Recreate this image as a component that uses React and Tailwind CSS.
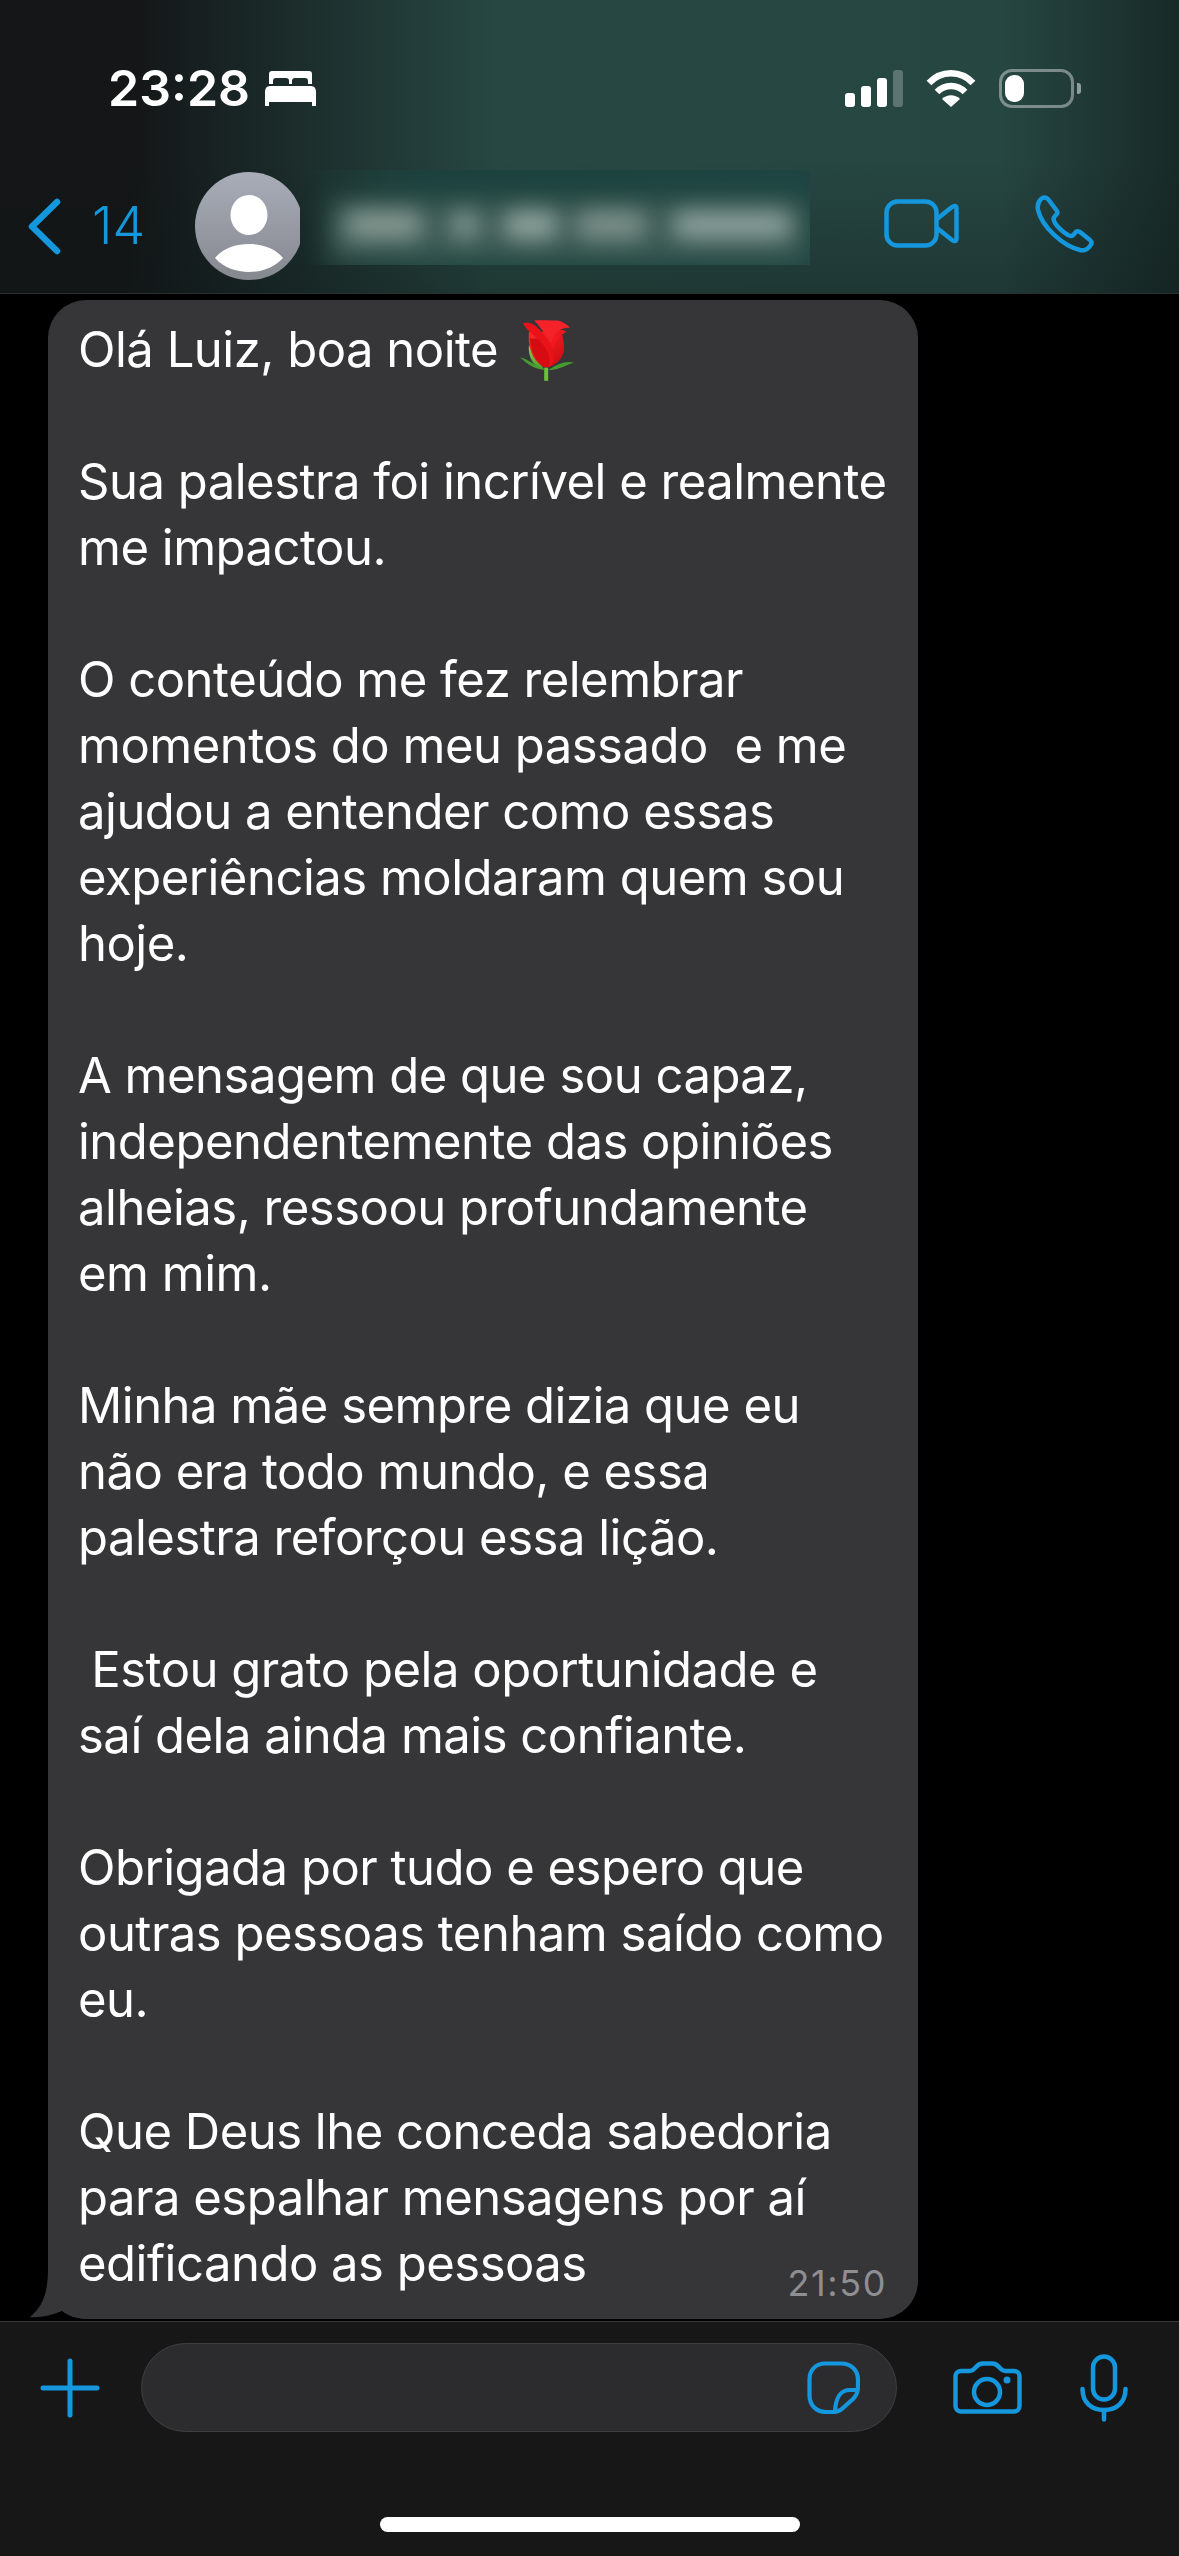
import React from "react";

const BLUE = "#1597de";

const lines = `Olá Luiz, boa noite 

Sua palestra foi incrível e realmente
me impactou.

O conteúdo me fez relembrar
momentos do meu passado  e me
ajudou a entender como essas
experiências moldaram quem sou
hoje.

A mensagem de que sou capaz,
independentemente das opiniões
alheias, ressoou profundamente
em mim.

Minha mãe sempre dizia que eu
não era todo mundo, e essa
palestra reforçou essa lição.

 Estou grato pela oportunidade e
saí dela ainda mais confiante.

Obrigada por tudo e espero que
outras pessoas tenham saído como
eu.

Que Deus lhe conceda sabedoria
para espalhar mensagens por aí
edificando as pessoas`.split("\n");

const Bed = () => (
  <svg width="51" height="35" viewBox="0 0 51 35" fill="#fff">
    <path d="M7 0 H44 Q47 0 47 3 V13 H43 V10 Q43 7 40 7 H30 Q27 7 27 10 V13 H24 V10 Q24 7 21 7 H11 Q8 7 8 10 V13 H4 V3 Q4 0 7 0Z" />
    <path d="M5 15 H46 Q51 15 51 21 V35 H47 V31 H4 V35 H0 V21 Q0 15 5 15Z" />
  </svg>
);

const Signal = () => (
  <div className="flex items-end gap-[6px] h-[37px]">
    <div className="w-[10px] h-[14px] rounded-[3px] bg-white" />
    <div className="w-[10px] h-[21px] rounded-[3px] bg-white" />
    <div className="w-[10px] h-[29px] rounded-[3px] bg-white" />
    <div className="w-[10px] h-[37px] rounded-[3px] bg-white/25" />
  </div>
);

const Wifi = () => (
  <svg width="50" height="37" viewBox="0 0 50 37" fill="none" stroke="#fff" strokeWidth="6.5">
    <path d="M3 13 C15 0 35 0 47 13" />
    <path d="M11 22 C19 14 31 14 39 22" />
    <path d="M25 37 L16 29 C21 24 29 24 34 29 Z" fill="#fff" stroke="none" />
  </svg>
);

const Battery = () => (
  <div className="flex items-center gap-[3px]">
    <div className="w-[75px] h-[39px] rounded-[13px] border-[3px] border-white/40 p-[3px]">
      <div className="w-[19px] h-[27px] rounded-[9px] bg-white" />
    </div>
    <div className="w-[4px] h-[11px] rounded-r-[3px] bg-white/50" />
  </div>
);

const Chevron = () => (
  <svg width="33" height="57" viewBox="0 0 33 57" fill="none" stroke={BLUE} strokeWidth="6.5" strokeLinecap="round" strokeLinejoin="round">
    <path d="M29 4 L4 28.5 L29 53" />
  </svg>
);

const Avatar = () => (
  <div className="w-[105px] h-[108px] overflow-hidden shrink-0">
    <svg width="108" height="108" viewBox="0 0 108 108">
      <defs>
        <linearGradient id="av" x1="0" y1="0" x2="0" y2="1">
          <stop offset="0" stopColor="#a9adb8" />
          <stop offset="1" stopColor="#85888f" />
        </linearGradient>
      </defs>
      <circle cx="54" cy="54" r="54" fill="url(#av)" />
      <ellipse cx="54" cy="43" rx="18.5" ry="20" fill="#fff" />
      <path d="M20 86 C28 76 41 72 54 72 C67 72 80 76 88 86 C80 95 67 100 54 100 C41 100 28 95 20 86Z" fill="#fff" />
    </svg>
  </div>
);

const BlurredName = () => (
  <div className="relative w-[510px] h-[95px] shrink-0 overflow-hidden bg-linear-to-r from-transparent via-[#1d423e] via-[25%] to-[#1e4541]">
    <div className="absolute left-[30px] right-[4px] top-[30px] h-[60px] bg-[#3e5c56] blur-[12px]" />
    <div className="absolute inset-0 flex items-center pl-[45px] pt-[14px]">
      <div className="w-[78px] h-[26px] rounded-full bg-[#8a9c95] blur-[11px]" />
      <div className="ml-[26px] w-[32px] h-[26px] rounded-full bg-[#80968f] blur-[11px]" />
      <div className="ml-[22px] w-[56px] h-[26px] rounded-full bg-[#94a7a1] blur-[11px]" />
      <div className="ml-[16px] w-[72px] h-[26px] rounded-full bg-[#80938d] blur-[11px]" />
      <div className="ml-[25px] w-[120px] h-[26px] rounded-full bg-[#8fa3a0] blur-[11px]" />
    </div>
  </div>
);

const VideoIcon = () => (
  <svg width="75" height="50" viewBox="0 0 75 50" fill="none" stroke={BLUE} strokeWidth="4.5" strokeLinejoin="round">
    <rect x="2.5" y="2.5" width="50" height="44" rx="11" />
    <path d="M53 20 L68 8 Q72.5 5 72.5 10 V39 Q72.5 44 68 41 L53 29" />
  </svg>
);

const PhoneIcon = () => (
  <svg width="60" height="60" viewBox="0 0 60 60" fill="none" stroke={BLUE} strokeWidth="4.5" strokeLinejoin="round">
    <path d="M6 5 C8 3 11 3 13 5 L22 17 C23 19 22 20 20 22 C18 24 18 26 20 29 C24 35 28 38 33 41 C36 43 38 42 40 39 C41 37 43 37 45 38 L55 46 C57 48 57 50 55 52 C52 56 49 57 45 56 C28 52 7 33 3 16 C2 11 3 8 6 5 Z" />
  </svg>
);

const Rose = () => (
  <svg width="54" height="62" viewBox="65 52 163 186" className="inline-block ml-[9px] align-[-14px]">
    <defs>
      <linearGradient id="petal" x1="0" y1="0" x2="1" y2="1">
        <stop offset="0" stopColor="#ff2a2a" />
        <stop offset="1" stopColor="#c9080f" />
      </linearGradient>
      <linearGradient id="leaf" x1="0" y1="0" x2="0" y2="1">
        <stop offset="0" stopColor="#9ad050" />
        <stop offset="1" stopColor="#469a30" />
      </linearGradient>
    </defs>
    <rect x="138" y="198" width="12" height="40" fill="#6cc03a" />
    <path d="M65 168 C90 172 105 190 140 205 C110 205 90 190 65 168Z" fill="#469a30" />
    <path d="M228 183 C195 176 175 192 150 205 C180 208 205 190 228 183Z" fill="#469a30" />
    <path d="M92 130 C88 165 105 198 140 205 C120 180 105 155 92 130Z" fill="url(#leaf)" />
    <path d="M92 90 C88 130 98 172 135 196 C150 202 190 185 197 150 C201 125 192 100 190 90 Z" fill="url(#petal)" />
    <path d="M165 145 C170 120 185 100 205 90 C192 80 170 85 150 105 Z" fill="#f2181d" />
    <path d="M108 55 C130 55 150 55 180 56 C200 62 215 75 216 78 C190 75 170 90 158 125 C145 100 125 75 108 55Z" fill="#f5222a" />
    <path d="M74 64 C90 58 108 65 125 85 C145 108 165 135 165 175 C165 185 160 195 150 197 C162 165 140 130 118 110 C100 95 85 85 74 64Z" fill="#ea1219" />
    <path d="M118 110 C140 130 162 165 150 197 C125 195 100 165 95 110 Z" fill="#d60c13" />
  </svg>
);

const PlusIcon = () => (
  <svg width="60" height="60" viewBox="0 0 60 60" stroke={BLUE} strokeWidth="5" strokeLinecap="round">
    <path d="M30 3 V57 M3 30 H57" />
  </svg>
);

const StickerIcon = () => (
  <svg width="53" height="53" viewBox="0 0 53 53" fill="none" stroke={BLUE} strokeWidth="4.2">
    <path d="M18 2.5 H34 C44 2.5 51 9 51 19 V26 C51 31 49 35 46 38 L36 47 C33 50 29 51 26 51 H19 C9 51 2.5 44 2.5 34 V18 C2.5 9 9 2.5 18 2.5 Z" />
    <path d="M51 29 H43 C34 29 29 35 28 50" />
  </svg>
);

const CameraIcon = () => (
  <svg width="69" height="53" viewBox="0 0 69 53" fill="none" stroke={BLUE} strokeWidth="4.5">
    <path d="M8 10 H17 C20 10 21 8 23 6 C25 3.5 27 2.5 30 2.5 H39 C42 2.5 44 3.5 46 6 C48 8 49 10 52 10 H61 C64 10 66.5 12 66.5 15 V45 C66.5 48 64 50.5 61 50.5 H8 C5 50.5 2.5 48 2.5 45 V15 C2.5 12 5 10 8 10 Z" />
    <circle cx="34" cy="31" r="13" />
    <circle cx="54" cy="19" r="3.5" fill={BLUE} stroke="none" />
  </svg>
);

const MicIcon = () => (
  <svg width="48" height="68" viewBox="0 0 48 68" fill="none" stroke={BLUE} strokeWidth="4.5" strokeLinecap="round">
    <rect x="13" y="2.5" width="22" height="43" rx="11" />
    <path d="M2.5 35 C2.5 48 11 56 24 56 C37 56 45.5 48 45.5 35" />
    <path d="M24 56 V65.5" />
  </svg>
);

const App = () => {
  return (
    <div className="w-[1179px] h-[2556px] flex flex-col bg-black overflow-hidden font-['Inter','Liberation_Sans',sans-serif]">
      <header className="h-[294px] shrink-0 border-b border-[#2c2f2f] bg-[linear-gradient(180deg,transparent_55%,rgba(12,22,22,0.3)_100%),linear-gradient(90deg,#141617_0%,#141617_11%,#1b2b2a_24%,#274742_42%,#264642_85%,#182a28_100%)]">
        <div className="flex items-center justify-between h-[38px] mt-[69px] pl-[108px] pr-[98px]">
          <div className="flex items-center gap-[15px]">
            <span className="text-[50px] leading-[38px] font-semibold text-white">23:28</span>
            <Bed />
          </div>
          <div className="flex items-center gap-[23px]">
            <Signal />
            <Wifi />
            <Battery />
          </div>
        </div>
        <div className="flex items-start mt-[63px] pl-[28px]">
          <div className="mt-[28px]"><Chevron /></div>
          <span className="w-[103px] ml-[31px] mt-[26px] text-[52px] leading-[60px] font-light text-[#1597de]">14</span>
          <div className="mt-[2px]"><Avatar /></div>
          <BlurredName />
          <div className="mt-[29px] ml-[74px]"><VideoIcon /></div>
          <div className="mt-[24px] ml-[76px]"><PhoneIcon /></div>
        </div>
      </header>

      <main className="flex-1 pt-[6px] pl-[48px] overflow-hidden">
        <div className="relative w-[870px] h-[2019px] rounded-[38px] bg-[#363638] pl-[30px] pt-[17px]">
          <svg width="60" height="50" viewBox="0 0 60 50" className="absolute left-[-18px] bottom-0" fill="#363638">
            <path d="M18 0 C18 25 12 38 0 48 C10 49 22 46 32 42 C40 48 48 50 60 50 L60 0 Z" />
          </svg>
          <div className="relative text-[49px] leading-[66px] tracking-[-0.5px] text-white whitespace-pre">
            {lines.map((line, i) => (
              <div key={i} className="h-[66px]">
                {line}
                {i === 0 && <Rose />}
              </div>
            ))}
          </div>
          <span className="absolute right-[31px] bottom-[18px] text-[36px] leading-[36px] tracking-[1.6px] text-[#8e8e93]">21:50</span>
        </div>
      </main>

      <footer className="h-[235px] shrink-0 border-t border-[#3a3a3a] bg-[#171717]">
        <div className="flex items-center mt-[21px] pl-[40px]">
          <PlusIcon />
          <div className="flex items-center justify-end ml-[41px] w-[756px] h-[89px] rounded-full border border-[#3f3f3f] bg-[#2c2c2e] pr-[36px]">
            <StickerIcon />
          </div>
          <div className="ml-[56px]"><CameraIcon /></div>
          <div className="ml-[58px]"><MicIcon /></div>
        </div>
        <div className="mx-auto mt-[85px] w-[420px] h-[15px] rounded-full bg-white" />
      </footer>
    </div>
  );
};

export default App;
